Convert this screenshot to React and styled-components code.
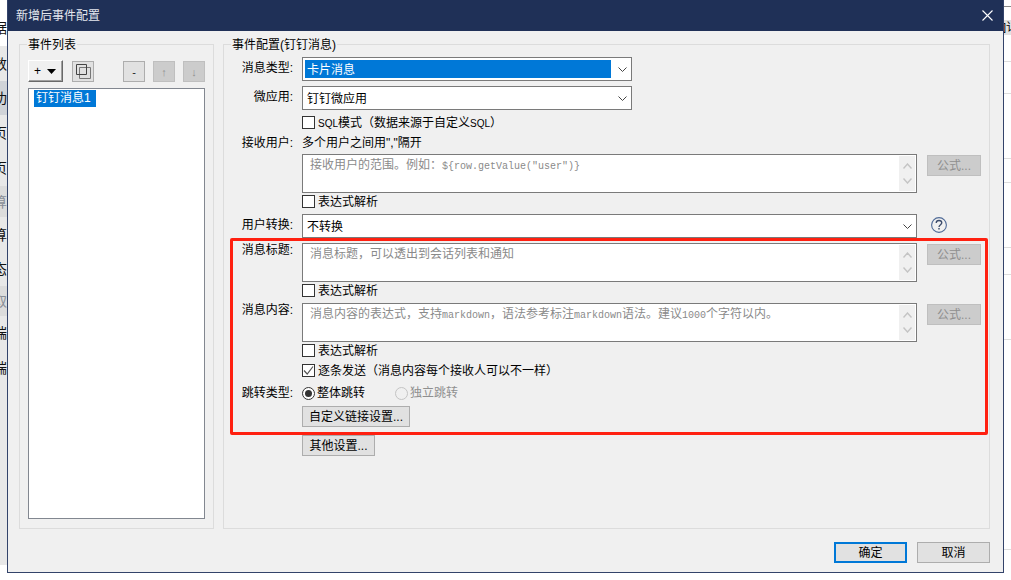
import styled, { createGlobalStyle } from "styled-components";

const GlobalStyle = createGlobalStyle`
  html, body {
    margin: 0;
    padding: 0;
    background: #ffffff;
  }
  * {
    box-sizing: border-box;
  }
`;

const leftRows = [
  { height: 46, char: "据", tone: "#ffffff", pad: 10 },
  { height: 35, char: "数", tone: "#e8e8e8" },
  { height: 34, char: "功", tone: "#d0d3d8" },
  { height: 35, char: "页", tone: "#e8e8e8" },
  { height: 36, char: "页", tone: "#e8e8e8" },
  { height: 31, char: "算", tone: "#dcdcdc", muted: true },
  { height: 35, char: "算", tone: "#e8e8e8" },
  { height: 34, char: "态", tone: "#e8e8e8" },
  { height: 30, char: "取", tone: "#dcdcdc", muted: true },
  { height: 34, char: "端", tone: "#e8e8e8" },
  { height: 35, char: "端", tone: "#e8e8e8" },
  { height: 180, char: "", tone: "#e8e8e8" },
];

const rightLines = [7, 13, 42, 32, 65, 24, 65, 27, 65, 210];

export default function App() {
  return (
    <Page>
      <GlobalStyle />
      <LeftStrip>
        {leftRows.map((row, i) => (
          <StripRow key={i} $height={row.height} $tone={row.tone} $muted={row.muted} $pad={row.pad}>
            <span>{row.char}</span>
          </StripRow>
        ))}
      </LeftStrip>

      <Dialog>
        <TitleBar>
          <span>新增后事件配置</span>
          <svg width="11" height="11" viewBox="0 0 11 11">
            <path d="M0.5 0.5 L10.5 10.5 M10.5 0.5 L0.5 10.5" stroke="#ffffff" strokeWidth="1.1" />
          </svg>
        </TitleBar>

        <Body>
          <Columns>
            <ListGroup>
              <Legend>事件列表</Legend>
              <Toolbar>
                <AddButton>
                  <span>+</span>
                  <svg width="9" height="5" viewBox="0 0 9 5">
                    <path d="M0 0 H9 L4.5 5 Z" fill="#000000" />
                  </svg>
                </AddButton>
                <IconButton>
                  <svg width="15" height="15" viewBox="0 0 15 15" fill="none" stroke="#444444">
                    <path d="M3.5 3.5 H14.5 V14.5 H3.5 Z" stroke="#777777" />
                    <path d="M0.5 0.5 H10.5 V10.5 H0.5 Z" />
                  </svg>
                </IconButton>
                <Spacer />
                <SmallButton>-</SmallButton>
                <SmallButton $disabled>↑</SmallButton>
                <SmallButton $disabled>↓</SmallButton>
              </Toolbar>
              <EventList>
                <EventItem>钉钉消息1</EventItem>
              </EventList>
            </ListGroup>

            <ConfigGroup>
              <Legend>事件配置(钉钉消息)</Legend>

              <Row>
                <FieldLabel $pad={4}>消息类型:</FieldLabel>
                <Select $width={330}>
                  <SelectValue $selected>卡片消息</SelectValue>
                  <Chevron />
                </Select>
              </Row>
              <Row $mt={5}>
                <FieldLabel $pad={4}>微应用:</FieldLabel>
                <Select $width={330}>
                  <SelectValue>钉钉微应用</SelectValue>
                  <Chevron />
                </Select>
              </Row>
              <Row $mt={6}>
                <FieldLabel />
                <Check>
                  <Latin>SQL</Latin>模式（数据来源于自定义<Latin>SQL</Latin>）
                </Check>
              </Row>
              <Row $mt={6}>
                <FieldLabel>接收用户:</FieldLabel>
                <PlainText>多个用户之间用",&quot;隔开</PlainText>
              </Row>
              <Row $mt={4}>
                <FieldLabel />
                <TextBox>
                  接收用户的范围。例如：<Mono>{'${row.getValue("user")}'}</Mono>
                </TextBox>
                <FormulaButton>公式...</FormulaButton>
              </Row>
              <Row $mt={2}>
                <FieldLabel />
                <Check>表达式解析</Check>
              </Row>
              <Row $mt={5}>
                <FieldLabel $pad={4}>用户转换:</FieldLabel>
                <Select $width={615}>
                  <SelectValue>不转换</SelectValue>
                  <Chevron />
                </Select>
                <HelpIcon width="16" height="16" viewBox="0 0 16 16" fill="none">
                  <circle cx="8" cy="8" r="7.4" stroke="#4f6a96" strokeWidth="1.1" />
                  <path
                    d="M5.2 6 C5.2 4.3 6.4 3.5 8 3.5 C9.7 3.5 10.8 4.4 10.8 5.8 C10.8 7.6 8 7.8 8 10"
                    stroke="#3a4a6a"
                    strokeWidth="1.3"
                  />
                  <path d="M8 11 V12.6" stroke="#3a4a6a" strokeWidth="1.4" />
                </HelpIcon>
              </Row>
              <Row $mt={5}>
                <FieldLabel>消息标题:</FieldLabel>
                <TextBox>消息标题，可以透出到会话列表和通知</TextBox>
                <FormulaButton>公式...</FormulaButton>
              </Row>
              <Row $mt={2}>
                <FieldLabel />
                <Check>表达式解析</Check>
              </Row>
              <Row $mt={5}>
                <FieldLabel>消息内容:</FieldLabel>
                <TextBox>
                  消息内容的表达式，支持<Mono>markdown</Mono>，语法参考标注<Mono>markdown</Mono>语法。建议<Mono>1000</Mono>个字符以内。
                </TextBox>
                <FormulaButton>公式...</FormulaButton>
              </Row>
              <Row $mt={2}>
                <FieldLabel />
                <Check>表达式解析</Check>
              </Row>
              <Row $mt={6}>
                <FieldLabel />
                <Check $checked>逐条发送（消息内容每个接收人可以不一样）</Check>
              </Row>
              <Row $mt={8}>
                <FieldLabel>跳转类型:</FieldLabel>
                <RadioOption $checked>整体跳转</RadioOption>
                <RadioOption $disabled>独立跳转</RadioOption>
              </Row>
              <Row $mt={6}>
                <FieldLabel />
                <PushButton $width={108}>自定义链接设置...</PushButton>
              </Row>
              <Row $mt={8}>
                <FieldLabel />
                <PushButton $width={73}>其他设置...</PushButton>
              </Row>
            </ConfigGroup>
          </Columns>

          <Footer>
            <FooterButton $primary>确定</FooterButton>
            <FooterButton>取消</FooterButton>
          </Footer>
        </Body>
      </Dialog>

      <RightStrip>
        {rightLines.map((height, i) => (
          <RightRow key={i} $height={height} $first={i === 0} $header={i === 2}>
            {i === 2 && <HeaderCell>]讠</HeaderCell>}
          </RightRow>
        ))}
      </RightStrip>

      <Highlight />
    </Page>
  );
}

function Chevron() {
  return (
    <svg width="9" height="5" viewBox="0 0 9 5" fill="none">
      <path d="M0.5 0.5 L4.5 4.5 L8.5 0.5" stroke="#444444" strokeWidth="1" />
    </svg>
  );
}

function TextBox({ children }) {
  return (
    <TextBoxFrame>
      <Placeholder>{children}</Placeholder>
      <ScrollStrip>
        <svg width="9" height="6" viewBox="0 0 9 6" fill="none">
          <path d="M0.5 5.5 L4.5 1 L8.5 5.5" stroke="#c4c4c4" strokeWidth="1.4" />
        </svg>
        <svg width="9" height="6" viewBox="0 0 9 6" fill="none">
          <path d="M0.5 0.5 L4.5 5 L8.5 0.5" stroke="#c4c4c4" strokeWidth="1.4" />
        </svg>
      </ScrollStrip>
    </TextBoxFrame>
  );
}

function Check({ $checked, children }) {
  return (
    <CheckLabel>
      <CheckBox>
        {$checked && (
          <svg width="11" height="11" viewBox="0 0 11 11" fill="none">
            <path d="M1 5.5 L4.2 9 L10 1.5" stroke="#555555" strokeWidth="1.2" />
          </svg>
        )}
      </CheckBox>
      <span>{children}</span>
    </CheckLabel>
  );
}

function RadioOption({ $checked, $disabled, children }) {
  return (
    <RadioLabel $disabled={$disabled}>
      <RadioCircle $checked={$checked} $disabled={$disabled} />
      <span>{children}</span>
    </RadioLabel>
  );
}

const Page = styled.div`
  position: relative;
  display: flex;
  width: 1011px;
  height: 580px;
  overflow: hidden;
  background: #ffffff;
  color: #000000;
  font-family: "Liberation Sans", "Noto Sans CJK SC", sans-serif;
  font-size: 12px;
  line-height: 14px;
`;

const LeftStrip = styled.div`
  width: 7px;
  flex: none;
  overflow: hidden;
`;

const StripRow = styled.div`
  height: ${(props) => props.$height}px;
  padding-top: ${(props) => props.$pad ?? 0}px;
  background: ${(props) => props.$tone};
  color: ${(props) => (props.$muted ? "#8a8f98" : "#111111")};
  display: flex;
  align-items: center;
  font-size: 14px;

  span {
    margin-left: -7px;
    width: 14px;
    flex: none;
  }
`;

const Dialog = styled.div`
  width: 997px;
  height: 573px;
  flex: none;
  display: flex;
  flex-direction: column;
  background: #f0f0f0;
  border: 1px solid #33436a;
  border-top: none;
`;

const TitleBar = styled.div`
  height: 31px;
  flex: none;
  display: flex;
  align-items: center;
  justify-content: space-between;
  padding: 0 10px 0 8px;
  background: #1f3057;
  color: #e4e7ee;
`;

const Body = styled.div`
  flex: 1;
  display: flex;
  flex-direction: column;
  padding: 13px 13px 0 11px;
`;

const Columns = styled.div`
  display: flex;
  gap: 9px;
  height: 485px;
`;

const Group = styled.div`
  position: relative;
  height: 100%;
  border: 1px solid #dcdcdc;
`;

const ListGroup = styled(Group)`
  width: 195px;
  padding: 15px 7px 0 8px;
`;

const ConfigGroup = styled(Group)`
  width: 767px;
  padding-top: 12px;
`;

const Legend = styled.div`
  position: absolute;
  top: -7px;
  left: 7px;
  padding: 0 1px;
  background: #f0f0f0;
  white-space: nowrap;
`;

const Toolbar = styled.div`
  display: flex;
  align-items: flex-start;
  gap: 8px;
  height: 28px;
`;

const Spacer = styled.div`
  width: 13px;
`;

const AddButton = styled.div`
  width: 35px;
  height: 22px;
  margin-right: 1px;
  display: flex;
  align-items: center;
  justify-content: space-between;
  padding: 0 6px 0 5px;
  background: #f0f0f0;
  border: 1px solid;
  border-color: #ffffff #696969 #696969 #ffffff;
  box-shadow: inset -1px -1px 0 #a0a0a0;
`;

const IconButton = styled.div`
  width: 22px;
  height: 21px;
  margin-top: 1px;
  display: flex;
  align-items: center;
  justify-content: center;
  background: #e1e1e1;
  border: 1px solid #adadad;
`;

const SmallButton = styled.div`
  width: 22px;
  height: 21px;
  margin-top: 1px;
  display: flex;
  align-items: center;
  justify-content: center;
  background: ${(props) => (props.$disabled ? "#cccccc" : "#e1e1e1")};
  border: 1px solid ${(props) => (props.$disabled ? "#bfbfbf" : "#adadad")};
  color: ${(props) => (props.$disabled ? "#929292" : "#222222")};
  font-size: 11px;
`;

const EventList = styled.div`
  width: 177px;
  height: 431px;
  background: #ffffff;
  border: 1px solid #828790;
  padding: 1px 5px;
`;

const EventItem = styled.div`
  display: inline-block;
  height: 17px;
  line-height: 17px;
  padding: 0 5px 0 2px;
  background: #0078d7;
  color: #ffffff;
`;

const Row = styled.div`
  display: flex;
  align-items: flex-start;
  margin-top: ${(props) => props.$mt ?? 0}px;
`;

const FieldLabel = styled.div`
  width: 69px;
  flex: none;
  margin-right: 9px;
  padding-top: ${(props) => props.$pad ?? 0}px;
  text-align: right;
  white-space: nowrap;
`;

const Select = styled.div`
  width: ${(props) => props.$width}px;
  height: 24px;
  flex: none;
  display: flex;
  align-items: center;
  justify-content: space-between;
  padding: 2px 4px 2px 2px;
  background: #ffffff;
  border: 1px solid #7a7a7a;
`;

const SelectValue = styled.div`
  flex: 1;
  height: 100%;
  margin-right: 7px;
  display: flex;
  align-items: center;
  padding: 2px 0 0 2px;
  background: ${(props) => (props.$selected ? "#0078d7" : "transparent")};
  color: ${(props) => (props.$selected ? "#ffffff" : "#000000")};
`;

const PlainText = styled.div`
  white-space: nowrap;
`;

const TextBoxFrame = styled.div`
  width: 615px;
  height: 39px;
  flex: none;
  display: flex;
  justify-content: space-between;
  background: #ffffff;
  border: 1px solid #7a7a7a;
  padding: 1px;
`;

const Placeholder = styled.div`
  padding: 2px 0 0 6px;
  color: #8a8a8a;
  white-space: nowrap;
`;

const Mono = styled.span`
  font-family: "Liberation Mono", monospace;
  font-size: 10px;
`;

const Latin = styled.span`
  font-size: 10px;
`;

const ScrollStrip = styled.div`
  width: 16px;
  flex: none;
  display: flex;
  flex-direction: column;
  align-items: center;
  justify-content: space-around;
  padding: 3px 0;
  background: #f0f0f0;
`;

const FormulaButton = styled.div`
  width: 54px;
  height: 21px;
  flex: none;
  margin: 1px 0 0 10px;
  display: flex;
  align-items: center;
  justify-content: center;
  background: #cccccc;
  border: 1px solid #bfbfbf;
  color: #8f8f8f;
`;

const HelpIcon = styled.svg`
  flex: none;
  margin: 3px 0 0 14px;
`;

const CheckLabel = styled.div`
  display: flex;
  align-items: flex-start;
  gap: 3px;
  height: 14px;
  white-space: nowrap;
`;

const CheckBox = styled.div`
  width: 13px;
  height: 13px;
  flex: none;
  display: flex;
  align-items: center;
  justify-content: center;
  background: #ffffff;
  border: 1px solid #333333;
`;

const RadioLabel = styled.div`
  display: flex;
  align-items: center;
  gap: 2px;
  width: 93px;
  height: 14px;
  white-space: nowrap;
  color: ${(props) => (props.$disabled ? "#8f8f8f" : "#000000")};
`;

const RadioCircle = styled.div`
  width: 13px;
  height: 13px;
  flex: none;
  border-radius: 50%;
  border: 1px solid ${(props) => (props.$disabled ? "#c4c4c4" : "#333333")};
  background: ${(props) => (props.$disabled ? "#f0f0f0" : "#ffffff")};
  display: flex;
  align-items: center;
  justify-content: center;

  &::after {
    content: "";
    display: ${(props) => (props.$checked ? "block" : "none")};
    width: 7px;
    height: 7px;
    border-radius: 50%;
    background: #333333;
  }
`;

const PushButton = styled.div`
  width: ${(props) => props.$width}px;
  height: 21px;
  flex: none;
  display: flex;
  align-items: center;
  justify-content: center;
  background: #e1e1e1;
  border: 1px solid #adadad;
`;

const Footer = styled.div`
  display: flex;
  justify-content: flex-end;
  gap: 10px;
  margin-top: 13px;
`;

const FooterButton = styled.div`
  width: 73px;
  height: 21px;
  display: flex;
  align-items: center;
  justify-content: center;
  background: #e1e1e1;
  border: ${(props) => (props.$primary ? "2px solid #0078d7" : "1px solid #adadad")};
`;

const RightStrip = styled.div`
  width: 7px;
  flex: none;
  overflow: hidden;
`;

const RightRow = styled.div`
  height: ${(props) => props.$height}px;
  border-bottom: 1px solid ${(props) => (props.$first ? "#888888" : "#dddddd")};
  ${(props) => props.$height === 13 && "border-bottom: none;"}
`;

const HeaderCell = styled.div`
  height: 15px;
  background: #e1e1e1;
  font-size: 11px;
  line-height: 15px;
  white-space: nowrap;
  margin-left: -1px;
`;

const Highlight = styled.div`
  position: absolute;
  left: 230px;
  top: 238px;
  width: 758px;
  height: 197px;
  border: 3px solid #ff2010;
  border-radius: 2px;
  pointer-events: none;
`;
